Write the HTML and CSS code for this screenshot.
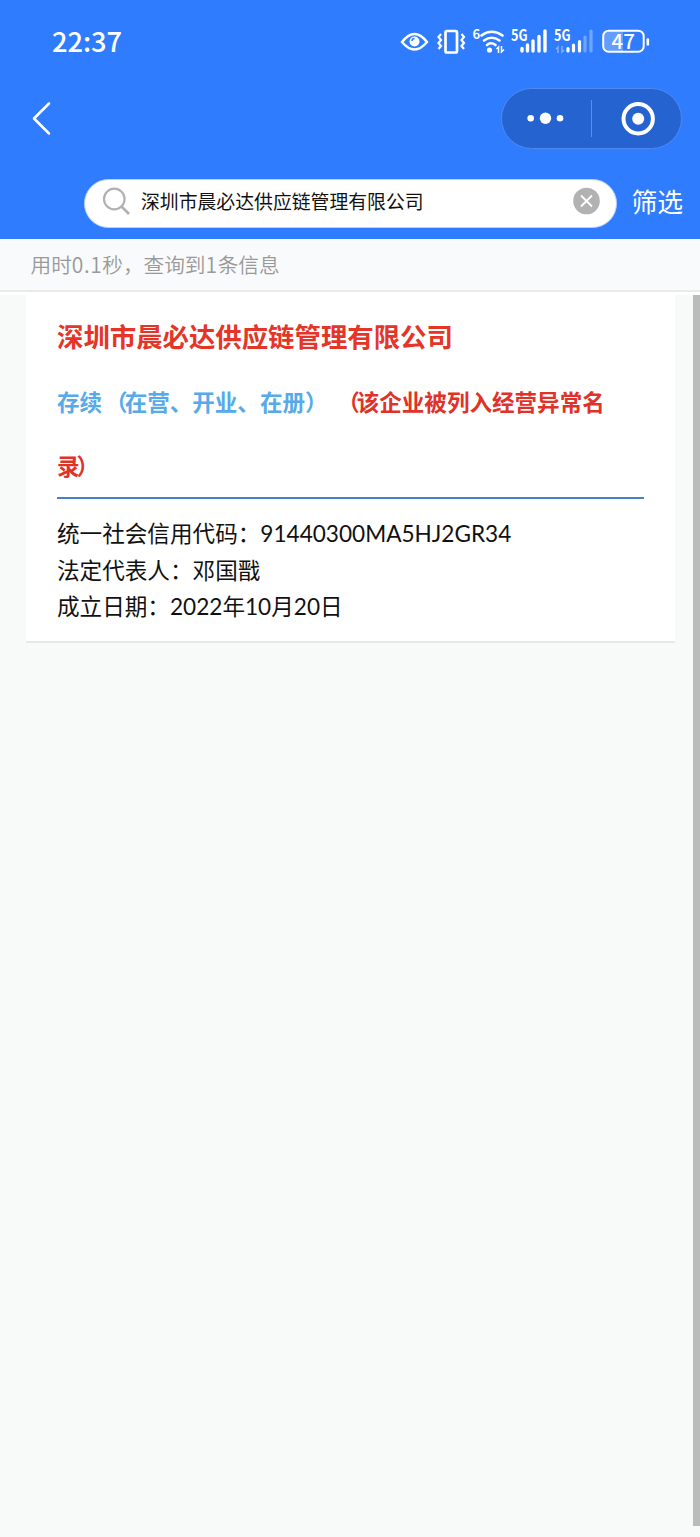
FILE: index.html
```html
<!DOCTYPE html>
<html lang="zh-CN">
<head>
<meta charset="utf-8">
<title>企业信息查询</title>
<link rel="stylesheet" href="styles.css">
</head>
<body>
<header class="header">
  <div class="status">
    <span class="clock">22:37</span>
    <svg class="status-icons" width="256" height="36" viewBox="396 24 256 36" fill="none" stroke="#fff">
      <path d="M402 42Q414.500 26 427 42Q414.500 57 402 42Z" stroke-width="2.400"/>
      <circle cx="414.500" cy="41.500" r="5" fill="#fff" stroke="none"/>
      <path d="M412 41q0-2.500 2.500-2.500" stroke="#2f7cff" stroke-width="1.500"/>
      <rect x="445.500" y="31" width="11.500" height="21.500" rx="1.500" stroke-width="2.700"/>
      <path d="M441 34l-2.500 3 2.500 3-2.500 3 2.500 3-2.500 3M461.500 34l2.500 3-2.500 3 2.500 3-2.500 3 2.500 3" stroke-width="2.200"/>
      <path d="M481.500 35.500Q491.500 28 502.500 35.500M484 40.500Q491.500 35 499.500 40.500M487 45Q491 41.500 495.500 45" stroke-width="2.600" stroke-linecap="round"/>
      <circle cx="489.500" cy="50" r="2.600" fill="#fff" stroke="none"/>
      <path d="M496.500 49l2-2v6M501.500 46v6l2.500-2.500" stroke-width="1.500"/>
      <g fill="#fff" stroke="none" class="signal-text">
        <text x="472.500" y="38.500" font-size="13">6</text>
        <text x="511" y="40.500" font-size="15.500" textLength="16.500" lengthAdjust="spacingAndGlyphs">5G</text>
        <text x="554" y="40.500" font-size="15.500" textLength="16.500" lengthAdjust="spacingAndGlyphs">5G</text>
      </g>
      <path d="M522 48.500V51M527.500 45V51M533 41V51M539 36.500V51M545 31V51" stroke-width="3.400" stroke-linecap="round"/>
      <path d="M568 48.500V51M573.500 45V51M579.500 41.500V51" stroke-width="3.200" stroke-linecap="round"/>
      <path d="M585 37V51M591 31V51" stroke-width="3.200" stroke-linecap="round" opacity=".32"/>
      <path d="M556 49l2-2v6M562 46v6l2-2" stroke-width="1.500" opacity=".4"/>
      <path d="M608 31.500H623V51.500H608Q604 51 604 46V36Q604 32 608 31.500Z" fill="#fff" fill-opacity=".25" stroke="none"/>
      <rect x="603.200" y="30.700" width="40.500" height="21" rx="5.500" stroke-width="2"/>
      <path d="M647.800 39.500v5" stroke-width="2.600" stroke-linecap="round"/>
      <text x="611.500" y="48.800" font-size="20.500" textLength="23.500" fill="#fff" stroke="none" class="battery-text">47</text>
    </svg>
  </div>
  <nav class="nav">
    <svg width="24" height="40" viewBox="0 0 24 40" fill="none" stroke="#fff" stroke-width="2.500" stroke-linecap="round" stroke-linejoin="round"><path d="M20 4.500L5 19.500L20 34.500"/></svg>
    <div class="capsule">
      <svg width="179" height="59" viewBox="1 1 179 59" fill="#fff">
        <circle cx="29.700" cy="30.300" r="3.300"/><circle cx="44.500" cy="30.300" r="5.700"/><circle cx="59" cy="30.300" r="3.300"/>
        <path d="M90.500 12V49" stroke="#5b8ee8"/>
        <circle cx="137.200" cy="30.700" r="14.700" fill="none" stroke="#fff" stroke-width="4"/>
        <circle cx="137.200" cy="30.700" r="6"/>
      </svg>
    </div>
  </nav>
  <div class="search-row">
    <div class="search">
      <svg width="28" height="30" viewBox="0 0 28 30" fill="none" stroke="#b1b1b1" stroke-width="2.200"><circle cx="11.300" cy="12" r="10.300"/><path d="M18.500 19.500L26 27" stroke-width="2.700"/></svg>
      <span class="query">深圳市晨必达供应链管理有限公司</span>
      <svg width="28" height="28" viewBox="0 0 28 28"><circle cx="13.500" cy="13" r="13.300" fill="#b2b2b2"/><path d="M8 7.500l11 11M19 7.500l-11 11" stroke="#fff" stroke-width="1.800"/></svg>
    </div>
    <span class="filter">筛选</span>
  </div>
</header>
<div class="summary">用时<span class="sum-num">0.1</span>秒，查询到<span class="sum-num">1</span>条信息</div>
<main class="results">
  <article class="card">
    <h1 class="name">深圳市晨必达供应链管理有限公司</h1>
    <p class="state"><span class="active">存续<span class="open">（</span>在营、开业、在册）</span> <span class="warning"><span class="open">（</span>该企业被列入经营异常名<br>录<span class="close">）</span></span></p>
    <div class="details">
      <div>统一社会信用代码：<span class="code">91440300MA5HJ2GR34</span></div>
      <div>法定代表人：邓国戬</div>
      <div>成立日期：<span class="num">2022</span>年<span class="num">10</span>月<span class="num">20</span>日</div>
    </div>
  </article>
  <div class="scrollbar"></div>
</main>
</body>
</html>
```
FILE: styles.css
```css
* { box-sizing: border-box; }
body {
  margin: 0;
  width: 700px;
  height: 1537px;
  display: flex;
  flex-direction: column;
  overflow: hidden;
  background: #f8fafa;
  color: #111;
  font-family: "Noto Sans CJK SC", sans-serif;
}
svg { display: block; flex: none; overflow: visible; }
.header { height: 239px; flex: none; background: #2f7cff; color: #fff; }
.status { height: 84px; padding: 0 48px 0 52px; display: flex; justify-content: space-between; align-items: center; }
.clock { padding-bottom: 4px; font: 500 27.2px/36px "Noto Sans CJK SC", sans-serif; }
.signal-text { font-family: "Noto Sans CJK SC", sans-serif; font-weight: 700; }
.battery-text { font-family: "Noto Sans CJK SC", sans-serif; font-weight: 500; }
.nav { height: 69px; padding: 0 18px 0 29px; display: flex; justify-content: space-between; align-items: center; }
.capsule { width: 181px; height: 61px; border: 1px solid #5089ee; border-radius: 31px; background: #2563d1; }
.search-row { height: 86px; padding: 26px 17px 0 84px; display: flex; justify-content: space-between; align-items: flex-start; }
.search { width: 533px; height: 49px; padding: 0 15px 4px 18px; display: flex; align-items: center; border: 1px solid #b9d2f4; border-radius: 25px; background: #fff; }
.query { flex: 1; margin-left: 10px; padding-bottom: 2px; color: #111; font-size: 18.85px; line-height: 28px; }
.filter { font-size: 25.8px; line-height: 44px; }
.summary { height: 53px; flex: none; padding-left: 30.5px; border-bottom: 2px solid #e9ebeb; background: #f9fafb; color: #999; font-size: 20.65px; font-weight: 350; line-height: 51px; white-space: nowrap; }
.sum-num { font-size: 21px; letter-spacing: .6px; }
.results { flex: 1; display: flex; justify-content: space-between; align-items: flex-start; border-top: 3px solid #fff; padding-left: 26px; }
.card { width: 649px; height: 348px; padding: 0 31px; border-bottom: 2px solid #e7e9e9; background: #fff; }
.name { margin: 0; padding-top: 21px; color: #e53528; font-size: 26.4px; font-weight: 700; line-height: 40px; }
.state { margin: 13px 0 0; height: 130px; border-bottom: 2px solid #4781c2; font-size: 22.56px; font-weight: 700; line-height: 64px; white-space: nowrap; }
.active { color: #56aae9; }
.warning { margin-left: 1.5px; color: #df332a; }
.open { margin: 0 -3px 0 3px; }
.close { margin-left: -3px; }
.details { padding-top: 16px; font-size: 22.6px; line-height: 36.2px; }
.num, .code { font-family: Lato, "Noto Sans CJK SC", sans-serif; }
.scrollbar { width: 7px; height: 1231px; background: #babcbb; }
```
